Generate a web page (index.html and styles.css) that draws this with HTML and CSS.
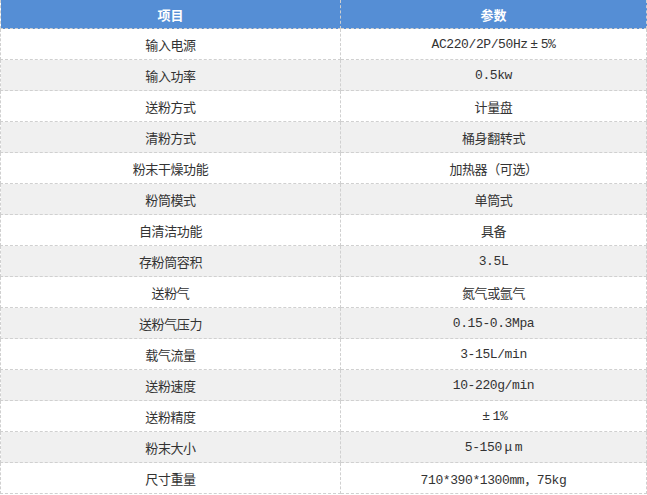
FILE: index.html
```html
<!DOCTYPE html>
<html lang="zh-CN">
<head>
<meta charset="utf-8">
<title>参数表</title>
<link rel="stylesheet" href="styles.css">
</head>
<body>
<table class="spec">
  <colgroup><col class="c1"><col class="c2"></colgroup>
  <thead>
    <tr><th>项目</th><th>参数</th></tr>
  </thead>
  <tbody>
    <tr><td>输入电源</td><td>AC220/2P/50Hz<span class="fw">±</span>5%</td></tr>
    <tr><td>输入功率</td><td>0.5kw</td></tr>
    <tr><td>送粉方式</td><td>计量盘</td></tr>
    <tr><td>清粉方式</td><td>桶身翻转式</td></tr>
    <tr><td>粉末干燥功能</td><td>加热器（可选）</td></tr>
    <tr><td>粉筒模式</td><td>单筒式</td></tr>
    <tr><td>自清洁功能</td><td>具备</td></tr>
    <tr><td>存粉筒容积</td><td>3.5L</td></tr>
    <tr><td>送粉气</td><td>氮气或氩气</td></tr>
    <tr><td>送粉气压力</td><td>0.15-0.3Mpa</td></tr>
    <tr><td>载气流量</td><td>3-15L/min</td></tr>
    <tr><td>送粉速度</td><td>10-220g/min</td></tr>
    <tr><td>送粉精度</td><td><span class="fw">±</span>1%</td></tr>
    <tr><td>粉末大小</td><td>5-150<span class="fw">μ</span>m</td></tr>
    <tr><td>尺寸重量</td><td>710*390*1300mm，75kg</td></tr>
  </tbody>
</table>
</body>
</html>
```

FILE: styles.css
```css
html, body {
  margin: 0;
  padding: 0;
  background: #ffffff;
}

.spec {
  border-collapse: collapse;
  table-layout: fixed;
  width: 646px;
  font-family: "Liberation Mono", "Noto Sans CJK SC", monospace;
  font-size: 13px;
  letter-spacing: -0.4px;
  color: #333333;
}

.spec .c1 { width: 340px; }
.spec .c2 { width: 306px; }

.spec th {
  height: 28px;
  padding: 0;
  background: #558ed5;
  color: #ffffff;
  font-family: "Noto Sans CJK SC", sans-serif;
  font-weight: bold;
  font-size: 13px;
  letter-spacing: 0;
  text-align: center;
  vertical-align: middle;
  border: 1px dashed #d0d0d0;
  border-top: 0;
}

.spec td {
  height: 30px;
  padding: 0;
  text-align: center;
  vertical-align: middle;
  border: 1px dashed #d0d0d0;
}

.spec .fw {
  display: inline-block;
  width: 13px;
  text-align: center;
  letter-spacing: 0;
}

.spec tbody tr:nth-child(even) td {
  background: #f0f0f0;
}
```
